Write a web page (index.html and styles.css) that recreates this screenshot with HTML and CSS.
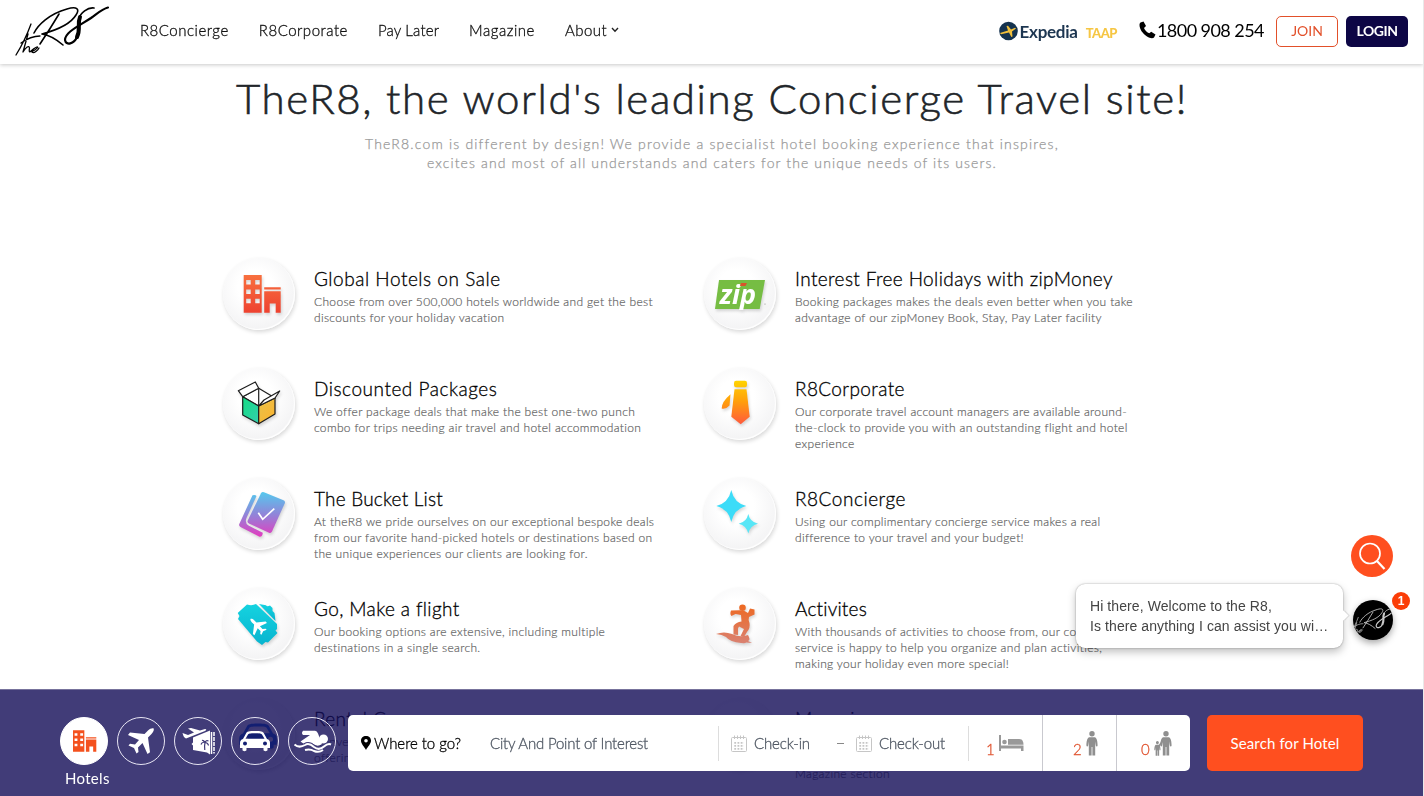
FILE: index.html
```html
<!DOCTYPE html>
<html lang="en">
<head>
<meta charset="utf-8">
<title>TheR8</title>
<link rel="stylesheet" href="styles.css">
</head>
<body>
<svg class="defs" width="0" height="0" aria-hidden="true">
  <defs>
    <linearGradient id="gHotel" x1="0" y1="0" x2="0" y2="1"><stop offset="0" stop-color="#f8703f"/><stop offset="1" stop-color="#ee4230"/></linearGradient>
    <linearGradient id="gGreen" x1="0" y1="0" x2="1" y2="1"><stop offset="0" stop-color="#14dc84"/><stop offset="1" stop-color="#35cfae"/></linearGradient>
    <linearGradient id="gGold" x1="0" y1="0" x2="1" y2="1"><stop offset="0" stop-color="#e8c24a"/><stop offset="1" stop-color="#fdb32e"/></linearGradient>
    <linearGradient id="gCard" gradientUnits="userSpaceOnUse" x1="0" y1="14" x2="0" y2="58"><stop offset="0" stop-color="#55c9ee"/><stop offset=".5" stop-color="#8f86d9"/><stop offset="1" stop-color="#e03fc0"/></linearGradient>
    <linearGradient id="gTie" gradientUnits="userSpaceOnUse" x1="0" y1="12" x2="0" y2="56"><stop offset="0" stop-color="#ffd500"/><stop offset=".5" stop-color="#ff9d0c"/><stop offset="1" stop-color="#ff5a3c"/></linearGradient>
    <linearGradient id="gTicket" x1="0" y1="0" x2="0" y2="1"><stop offset="0" stop-color="#15d3e0"/><stop offset="1" stop-color="#08b4cf"/></linearGradient>
    <linearGradient id="gSurf" gradientUnits="userSpaceOnUse" x1="0" y1="16" x2="0" y2="56"><stop offset="0" stop-color="#ee6820"/><stop offset="1" stop-color="#d98273"/></linearGradient>
    <g id="signature" fill="none" stroke="currentColor" stroke-linecap="round" stroke-linejoin="round">
      <path stroke-width="1.3" d="M31 23C27 34 21 46 16 54M21 42C28 37 34 35 40 35M28 33L23 51C26 46 29 44 29.500 47C29 50 29 52 31 50C35 46 39 45 37 47C35 50 31 50 32 51C34 53 38 49 39 47"/>
      <path stroke-width="1.600" d="M59 13C53 23 46 34 40 43M34 32C38 24 49 13 67 8C77 5 80 8 76 14C70 24 57 29 42 33C49 34 56 38 63 44"/>
      <path stroke-width="1.700" d="M94 7C88 6 80 12 79 18"/>
      <path stroke-width="4" d="M80 16C77 23 81 28 77 36"/>
      <path stroke-width="2.200" d="M77 36C74 43 66 45 65 39C65 31 79 25 91 17C98 12 102 8 108 6.500"/>
    </g>
    <g id="bldg">
      <path fill-rule="evenodd" d="M0 0H18V37.700H0ZM2.500 5V9.500H7V5ZM11.500 5V9.500H16V5ZM2.500 14.400V18.900H7V14.400ZM11.500 14.400V18.900H16V14.400ZM2.500 23.700V28.200H7V23.700ZM11.500 23.700V28.200H16V23.700ZM20.500 12.300H37V14.600H20.500ZM20.500 16.200H37V37.700H32V28.500H26V37.700H20.500Z"/>
    </g>
    <path id="plane" d="M36.500 11.300C35 10.800 33 11.500 31 13.500L27.500 17L13 15.500L11 18L22 23L18 27.500L13 26.800L11.500 28.500L17 31L19.500 36.500L21.500 35L21 30.500L25.500 26L30.500 37L33 35.300L31 20.500L34.500 17C36.700 14.700 37.300 12.500 36.500 11.300Z"/>
    <path id="car" fill-rule="evenodd" d="M12 22L15 16.500C16 14.500 18 14 24 14S32 14.500 33 16.500L36 22C38 22.500 39 24 39 26V31H36.500V33C36.500 34.500 32.500 34.500 32.500 33V31H15.500V33C15.500 34.500 11.500 34.500 11.500 33V31H9V26C9 24 10 22.500 12 22ZM14.500 21.800H33.500L31 17.500C30.500 16.600 29 16.300 24 16.300S17.500 16.600 17 17.500ZM14 24.500A2 2 0 1 0 14 28.500A2 2 0 1 0 14 24.500ZM34 24.500A2 2 0 1 0 34 28.500A2 2 0 1 0 34 24.500Z"/>
    <g id="cal" fill="none" stroke="#c6c6c6">
      <rect x=".5" y="2.500" width="15" height="14" rx="1"/>
      <path d="M3.500 .5V4M6.500 .5V4M9.500 .5V4M12.500 .5V4"/>
      <path stroke-width="1.800" stroke-dasharray="1.800 1.400" d="M3.300 7.800H13M3.300 10.800H13M3.300 13.800H13"/>
    </g>
    <path id="person" d="M8 0A2.700 2.700 0 1 1 8 5.400A2.700 2.700 0 1 1 8 0ZM5 6.200H11C13 7 13.600 11 13.600 14.500C13.400 16 12 15.500 11.800 14.500L11.200 10.500V24.500H8.400V16H7.600V24.500H4.800V10.500L4.200 14.500C4 15.500 2.600 16 2.400 14.500C2.400 11 3 7 5 6.200Z"/>
  </defs>
</svg>

<header class="topbar">
  <a class="logo" href="#"><svg width="112" height="60" viewBox="0 0 112 60"><use href="#signature"/></svg></a>
  <nav class="nav">
    <a href="#"><span>R8Concierge</span></a>
    <a href="#"><span>R8Corporate</span></a>
    <a href="#"><span class="snug">Pay Later</span></a>
    <a href="#"><span>Magazine</span></a>
    <a href="#"><span>About</span><svg class="caret" width="8" height="6" viewBox="0 0 8 6"><path d="M1 1L4 4.200L7 1" fill="none" stroke="#222" stroke-width="1.400"/></svg></a>
  </nav>
  <div class="partner">
    <svg width="20" height="20" viewBox="0 0 20 20"><circle cx="9.500" cy="10" r="9.300" fill="#15334f"/><path d="M1 12L9 9.500L7.500 5L9 4.800L12 8.600L16 6.800L17 7.500L13 10.500L13.500 15.500L12.300 16L10 11.500L2 13.200Z" fill="#f2c03b"/></svg>
    <span class="expedia">Expedia</span><span class="taap">TAAP</span>
  </div>
  <div class="phone">
    <svg width="17" height="18" viewBox="0 0 17 18"><path d="M1.500 1.500L4.500 .5L7 5L5 7C6 9.500 8 11.500 10.300 12.300L12.200 10.800L16.500 13.500L15 16.500C14 17.500 11 17.500 8 15.500C3.500 12.500 .5 8 .5 4C.5 3 .8 2 1.500 1.500Z"/></svg>
    <span>1800 908 254</span>
  </div>
  <a class="btn btn-join" href="#"><span>JOIN</span></a>
  <a class="btn btn-login" href="#"><span>LOGIN</span></a>
</header>

<main class="page">
  <h1 class="headline">TheR8, the world's leading Concierge Travel site!</h1>
  <p class="intro"><span>TheR8.com is different by design! We provide a specialist hotel booking experience that inspires,</span><br><span class="snug">excites and most of all understands and caters for the unique needs of its users.</span></p>

  <section class="features">
    <article class="feature">
      <div class="disc"><svg viewBox="0 0 72 72"><use href="#bldg" x="20.700" y="17" fill="url(#gHotel)"/></svg></div>
      <div class="copy"><h2 class="wide">Global Hotels on Sale</h2>
      <p>Choose from over 500,000 hotels worldwide and get the best<br>discounts for your holiday vacation</p></div>
    </article>
    <article class="feature">
      <div class="disc"><svg viewBox="0 0 72 72"><path fill="#76bd43" d="M15 22H61L55.700 51H11Z"/><text class="zip" x="34" y="45.500" text-anchor="middle">zip</text><path fill="#d9542b" d="M37 25H43L41.500 28H36Z"/><circle cx="61" cy="46" r=".6" fill="#888"/></svg></div>
      <div class="copy"><h2>Interest Free Holidays with zipMoney</h2>
      <p>Booking packages makes the deals even better when you take<br>advantage of our zipMoney Book, Stay, Pay Later facility</p></div>
    </article>
    <article class="feature">
      <div class="disc"><svg viewBox="0 0 72 72"><g stroke="#1d1d1d" stroke-width="1.200" stroke-linejoin="round"><path fill="#fff" d="M19.700 28.700L35.700 20.300L52 30L35.700 38Z"/><path fill="none" d="M35.700 20.300V37"/><path fill="url(#gGreen)" d="M19.700 28.700L35.700 38V55.700L19.700 47Z"/><path fill="url(#gGold)" d="M35.700 38L52 30V46L35.700 55.700Z"/><path fill="#fff" d="M15.300 22.700L32.300 14L35.700 20.300L19.700 28.700Z"/><path fill="#fff" d="M35.700 38L41 32L56.700 23L52 30Z"/></g></svg></div>
      <div class="copy"><h2 class="wide">Discounted Packages</h2>
      <p>We offer package deals that make the best one-two punch<br>combo for trips needing air travel and hotel accommodation</p></div>
    </article>
    <article class="feature">
      <div class="disc"><svg viewBox="0 0 72 72"><g fill="url(#gTie)"><path d="M32 12.700H41Q43 12.700 43 15V17Q43 19.300 41 19.300H32Q30 19.300 30 17V15Q30 12.700 32 12.700Z"/><path d="M30.500 21.300H42.500L45.700 48.700L36.700 56.300L27.300 48.700Z"/><path d="M26.500 26.300L25.500 37.500Q22 41.500 17.700 40.500Q17.500 34 26.500 26.300Z"/></g></svg></div>
      <div class="copy"><h2>R8Corporate</h2>
      <p>Our corporate travel account managers are available around-<br>the-clock to provide you with an outstanding flight and hotel<br>experience</p></div>
    </article>
    <article class="feature">
      <div class="disc"><svg viewBox="0 0 72 72"><g fill="url(#gCard)"><path d="M41 14.200L60.500 22.300Q62.500 23.300 61.800 25.200L49 53.500Q48 55.500 46 54.700L26 45.500Q24 44.500 24.700 42.500L38 15.200Q39 13.500 41 14.200Z"/><path d="M29.500 17.200Q32.500 16.500 33.500 18L23.500 40Q21.500 45 25.500 47.500L39.800 54.800Q39.500 59 36.500 58.700L17.500 49Q15.500 48 16.300 46Z"/></g><path d="M35.300 34.700L39.700 41.300L51.300 30.700" fill="none" stroke="#fff" stroke-width="1.700"/></svg></div>
      <div class="copy"><h2 class="snug">The Bucket List</h2>
      <p>At theR8 we pride ourselves on our exceptional bespoke deals<br>from our favorite hand-picked hotels or destinations based on<br>the unique experiences our clients are looking for.</p></div>
    </article>
    <article class="feature">
      <div class="disc"><svg viewBox="0 0 72 72"><path fill="#3cdcf8" d="M27.300 12Q30 25 42.300 28Q30 31 27.300 44Q24.500 31 12.300 28Q24.500 25 27.300 12Z"/><path fill="#58e6f6" d="M44.300 36Q46 44 54 45.700Q46 47.500 44.300 55.500Q42.500 47.500 34.700 45.700Q42.500 44 44.300 36Z"/></svg></div>
      <div class="copy"><h2 class="wide">R8Concierge</h2>
      <p>Using our complimentary concierge service makes a real<br>difference to your travel and your budget!</p></div>
    </article>
    <article class="feature">
      <div class="disc"><svg viewBox="0 0 72 72"><path fill="url(#gTicket)" d="M24 16.500Q29 18 33 16L54 36V41L52.500 42.500L54.500 45L45 54.500L42.500 54L39 57L34 53.500L15 31L16.500 28L14.700 25Z"/><path fill="url(#gTicket)" d="M36 16L43 17.200Q44 19 47 17.500L49.500 20V23L51.500 25L52.500 33Z"/><g transform="translate(51 23.500) scale(-.64 .64)"><use href="#plane" fill="#fff"/></g></svg></div>
      <div class="copy"><h2>Go, Make a flight</h2>
      <p>Our booking options are extensive, including multiple<br>destinations in a single search.</p></div>
    </article>
    <article class="feature">
      <div class="disc"><svg viewBox="0 0 72 72"><g fill="url(#gSurf)"><circle cx="38.500" cy="19.700" r="3.300"/><path d="M27 22.500L36 22.200Q41 22.500 44 25L46 20.500L50.500 21.500V26.500L45 29Q44 32 45.500 35Q46.500 40 43 44L40 49L36.500 48L40 41L35 38.500L34 40.500L34 47L29.500 46.500V38Q32 34 37.500 33.500L37 27L31.500 26L27.500 28Q25.500 26 27 22.500Z"/><path d="M12 46Q20 43 28 46Q36 50 44 47Q47 52 44 53L48 55L42 54.500Q42 55.500 37 55Q26 54 22 49Q18 46.500 12 46Z"/></g></svg></div>
      <div class="copy"><h2 class="snug">Activites</h2>
      <p>With thousands of activities to choose from, our concierge<br>service is happy to help you organize and plan activities,<br>making your holiday even more special!</p></div>
    </article>
    <article class="feature">
      <div class="disc"><svg viewBox="0 0 72 72"><g transform="translate(5 8) scale(1.250)"><use href="#car" fill="#1b6fe0"/></g></svg></div>
      <div class="copy"><h2>Rental Cars</h2>
      <p>Conveniently located rental cars<br>offering great deals worldwide</p></div>
    </article>
    <article class="feature">
      <div class="disc"></div>
      <div class="copy"><h2>Magazine</h2>
      <p>Read travel stories and destination guides<br>from around the world in our<br>Magazine section</p></div>
    </article>
  </section>
</main>

<a class="fab" href="#"><svg width="42" height="42" viewBox="0 0 42 42" fill="none" stroke="#fff"><circle cx="19" cy="18.500" r="10" stroke-width="1.700"/><path d="M26 26L33.500 34" stroke-width="2.200"/></svg></a>
<aside class="chat">
  <div class="bubble">Hi there, Welcome to the R8,<br>Is there anything I can assist you wi…</div>
  <div class="avatar"><svg width="40" height="40" viewBox="21 -10 76 76"><use href="#signature"/></svg><b class="badge">1</b></div>
</aside>

<section class="dock">
  <div class="kinds">
    <a class="kind active" href="#"><svg viewBox="0 0 48 48"><g transform="translate(13 13.300) scale(.63 .57)"><use href="#bldg" fill="#f4511e"/></g></svg><span>Hotels</span></a>
    <a class="kind" href="#"><svg viewBox="0 0 48 48"><use href="#plane"/></svg></a>
    <a class="kind" href="#"><svg viewBox="0 0 48 48"><path d="M8.500 16L14 18L20 15.500L14 11.500L17 11L26 13.500L31 12Q33.500 12.500 31 14L12 21.500Q9.500 20.500 8.500 16Z"/><path fill-rule="evenodd" d="M19 20.500L36 13.500V37.500L33 35.500L19 33V28.500L17.500 27L19 25.500Z"/><path fill="none" stroke="#403b77" stroke-width="1.200" d="M30.800 33Q30.200 29 31 25.500M31 25.500Q28 24.500 27 27.500M31 25.500Q34 25.500 34.500 28.500M31 25.500Q32 23 34.500 24M31 25.500Q29.500 23 28 23.500"/><path stroke="#fff" stroke-width="1.500" d="M37.500 15V37"/><path stroke="#fff" stroke-width="1.500" stroke-dasharray="4 1" d="M40 15V36.500"/></svg></a>
    <a class="kind" href="#"><svg viewBox="0 0 48 48"><use href="#car"/></svg></a>
    <a class="kind" href="#"><svg viewBox="0 0 48 48"><path d="M15 13.700H27Q29 14 30 16.500L34 27Q30 30 26 27.500Q21 24 16 27L12.500 24.500L22 18H15Q13 16 15 13.700Z"/><circle cx="35.500" cy="22" r="4.500"/><path d="M6.500 27.500Q11 31.500 17 28Q21 25.500 26 30Q31 34 36 29.500Q40 26 43 27.500" fill="none" stroke="#403b77" stroke-width="4"/><path d="M6.500 27.500Q11 31.500 17 28Q21 25.500 26 30Q31 34 36 29.500Q40 26 43 27.500M17 33Q22 31.500 26 34Q31 36 35 33" fill="none" stroke="#fff" stroke-width="2"/></svg></a>
  </div>
  <form class="search">
    <label class="where"><svg width="10" height="14" viewBox="0 0 10 14"><path fill-rule="evenodd" d="M5 0C8 0 10 2 10 4.800C10 8 6.500 11 5 14C3.500 11 0 8 0 4.800C0 2 2 0 5 0ZM5 3A1.800 1.800 0 1 0 5 6.600A1.800 1.800 0 1 0 5 3Z"/></svg><span>Where to go?</span></label>
    <div class="place">City And Point of Interest</div>
    <div class="dates">
      <svg width="16" height="17" viewBox="0 0 16 17"><use href="#cal"/></svg><span class="in">Check-in</span><i class="dash"></i>
      <svg width="16" height="17" viewBox="0 0 16 17"><use href="#cal"/></svg><span>Check-out</span>
    </div>
    <div class="count rooms"><span>1</span><svg width="25" height="16" viewBox="0 0 25 16" fill="#999"><path d="M0 0H2V10.500H24.500V16H22V13.500H2V16H0Z"/><circle cx="5.500" cy="7" r="2.300"/><path d="M9 4H20Q24.500 4 24.500 9.700H9Z"/></svg></div>
    <div class="count adults"><span>2</span><svg width="16" height="25" viewBox="0 0 16 25"><use href="#person" fill="#8f8f8f"/></svg></div>
    <div class="count kids"><span>0</span><svg width="19" height="25" viewBox="0 0 19 25" fill="#8f8f8f"><use href="#person" x="4"/><g transform="translate(-1 10) scale(.55 .6)"><use href="#person"/></g><path stroke="#8f8f8f" stroke-width="1.500" d="M5 15L8.500 10"/></svg></div>
  </form>
  <button class="go" type="button">Search for Hotel</button>
</section>
<div class="rail"></div>
</body>
</html>
```
FILE: styles.css
```css
* { box-sizing: border-box; }
html, body { height: 100%; }
body {
  margin: 0;
  overflow: hidden;
  background: #fff;
  color: #111;
  font-family: Lato, "Open Sans", sans-serif;
}
a { color: inherit; text-decoration: none; }
h1, h2, p { margin: 0; font-weight: 300; }
.defs { position: absolute; }

.topbar {
  position: fixed;
  top: 0; left: 0;
  z-index: 5;
  display: flex;
  align-items: center;
  width: 1423px;
  height: 64px;
  padding: 0 15px 2px 0;
  background: #fff;
  box-shadow: 0 1px 4px rgba(0, 0, 0, .22);
}
.logo { width: 140px; height: 60px; color: #000; }
.nav { display: flex; gap: 30px; padding-bottom: 2px; font-size: 15px; font-weight: 300; line-height: 20px; letter-spacing: .52px; -webkit-text-stroke: .3px; }
.nav .snug { letter-spacing: .16px; }
.nav a { display: flex; align-items: center; white-space: nowrap; }
.caret { margin-left: 4px; }
.partner { display: flex; align-items: center; margin-left: auto; height: 24px; }
.expedia { margin-left: 1px; color: #1d3651; font: 700 17px/20px Lato, sans-serif; letter-spacing: -.28px; padding-top: 2px; }
.taap { margin-left: 8px; color: #f6c644; font: 900 13px/20px Lato, sans-serif; letter-spacing: -.5px; padding-top: 4px; }
.phone { display: flex; align-items: center; gap: 1px; margin-left: 22px; font-size: 18px; letter-spacing: -.55px; line-height: 24px; color: #000; padding-bottom: 3px; }
.btn {
  display: flex; align-items: center; justify-content: center;
  width: 62px; height: 31px;
  padding-bottom: 1px;
  border-radius: 5px;
  font-size: 14px;
}
.btn-join { margin-left: 12px; border: 1px solid #e2502a; color: #e2502a; }
.btn-login { margin-left: 8px; background: #0d0645; color: #fff; font-weight: 700; letter-spacing: -.45px; }

.page { padding-top: 72px; }
.headline { color: #212529; font-size: 42px; line-height: 52px; letter-spacing: 1.63px; text-align: center; white-space: nowrap; -webkit-text-stroke: .6px; }
.intro { margin-top: 10px; color: #999; font-size: 14px; line-height: 19px; letter-spacing: 1.19px; text-align: center; -webkit-text-stroke: .25px; }
.intro .snug { letter-spacing: 1.12px; }
.features {
  display: grid;
  grid-template-columns: 481px 481px;
  grid-auto-rows: 110px;
  margin: 86px 0 0 223px;
}
.feature { display: flex; }
.disc {
  flex: none;
  width: 72px; height: 72px;
  border-radius: 50%;
  background: radial-gradient(circle at 45% 40%, #fff 30%, #ececee 100%);
  box-shadow: 1px 2px 4px rgba(0, 0, 0, .16), inset -1px -1px 1px #fff;
}
.disc svg { display: block; width: 72px; height: 72px; filter: drop-shadow(1px 2px 1.5px rgba(0, 0, 0, .16)); }
.zip { font: italic 700 27px "Open Sans", sans-serif; fill: #fff; }
.copy { padding: 9px 0 0 19px; white-space: nowrap; }
.copy h2 { color: #000; font-size: 19px; line-height: 24px; letter-spacing: .38px; -webkit-text-stroke: .3px; }
.copy .wide { letter-spacing: .53px; }
.copy .snug { letter-spacing: .2px; }
.copy p { margin-top: 3px; color: #666; font-size: 12px; line-height: 16px; letter-spacing: .33px; -webkit-text-stroke: .2px; }

.fab {
  position: fixed; top: 535px; left: 1351px; z-index: 6;
  width: 42px; height: 42px;
  border-radius: 50%;
  background: #ff4f1f;
}
.chat {
  position: fixed; top: 584px; left: 1076px; z-index: 6;
  display: flex;
  gap: 10px;
}
.bubble {
  position: relative;
  width: 267px; height: 64px;
  padding: 12px 14px;
  border-radius: 9px;
  background: #fff;
  box-shadow: 0 0 2px rgba(0, 0, 0, .35), 0 4px 9px rgba(0, 0, 0, .25);
  color: #444;
  font: 14px/20px "Liberation Sans", Arial, sans-serif;
  letter-spacing: .085px;
  white-space: nowrap;
}
.bubble::after {
  content: "";
  position: absolute; top: 28px; right: -4px;
  width: 7px; height: 7px;
  background: #fff;
  transform: rotate(45deg);
  box-shadow: 1px -1px 1px rgba(0, 0, 0, .12);
}
.avatar {
  position: relative;
  width: 40px; height: 40px;
  margin-top: 16px;
  border-radius: 50%;
  background: #000;
  color: #c9c9c9;
  box-shadow: 0 3px 7px rgba(0, 0, 0, .35);
}
.avatar svg { display: block; border-radius: 50%; }
.badge {
  position: absolute; top: -8px; right: -17px;
  width: 18px; height: 18px;
  border-radius: 50%;
  background: #fb3d07;
  color: #fff;
  font: 700 12px/18px "Liberation Sans", Arial, sans-serif;
  text-align: center;
}

.dock {
  position: fixed; left: 0; bottom: 0; z-index: 4;
  display: flex;
  width: 1423px; height: 107px;
  padding: 25px 60px 0;
  border-top: 1px solid #77739c;
  background: rgba(18, 11, 86, .8);
}
.kinds { display: flex; gap: 9px; padding-top: 2px; width: 288px; }
.kind {
  flex: none;
  width: 48px; height: 48px;
  border: 1.5px solid #e6e4f2;
  border-radius: 50%;
  color: #fff;
  font-size: 15px; line-height: 18px;
  text-align: center;
}
.kind svg { display: block; width: 48px; height: 48px; margin: -1px; fill: #fff; }
.kind span { display: block; margin: 5px 0 0 4px; letter-spacing: .3px; }
.active { background: #fff; border-color: #fff; }
.search {
  display: flex;
  align-items: center;
  flex: none;
  width: 842px; height: 56px;
  border-radius: 5px;
  background: #fff;
  font-size: 15px;
  font-weight: 300;
  letter-spacing: -.15px;
  -webkit-text-stroke: .3px;
}
.where { display: flex; align-items: center; gap: 3px; width: 142px; padding-left: 13px; color: #000; letter-spacing: -.05px; }
.where span { padding-bottom: 1px; }
.place { width: 229px; height: 35px; line-height: 34px; border-right: 1px solid #ddd; color: #4f5763; letter-spacing: -.2px; }
.dates { display: flex; align-items: center; width: 250px; height: 35px; padding-left: 12px; border-right: 1px solid #ddd; color: #4f5763; }
.dates span { margin-left: 7px; padding-bottom: 1px; }
.dates .in { width: 83px; }
.dash { width: 7px; height: 1px; margin-right: 12px; background: #888; }
.count { display: flex; align-items: flex-end; height: 56px; padding-bottom: 15px; color: #e0532f; font-size: 15px; line-height: 13px; }
.rooms { width: 74px; padding-left: 17px; gap: 4px; border-right: 1px solid #c9c9cf; }
.rooms svg { margin-bottom: 5px; }
.adults { width: 74px; padding-left: 30px; gap: 2px; border-right: 1px solid #c9c9cf; }
.kids { width: 73px; padding-left: 24px; gap: 4px; }
.go {
  width: 156px; height: 56px;
  margin-left: 17px;
  padding: 0 0 1px;
  border: 0;
  border-radius: 5px;
  background: #ff4f1f;
  color: #fff;
  font: 15px Lato, sans-serif;
  letter-spacing: .13px;
}
.rail { position: fixed; top: 0; right: 0; z-index: 9; width: 1px; height: 100%; background: #e9e9e9; }
```
